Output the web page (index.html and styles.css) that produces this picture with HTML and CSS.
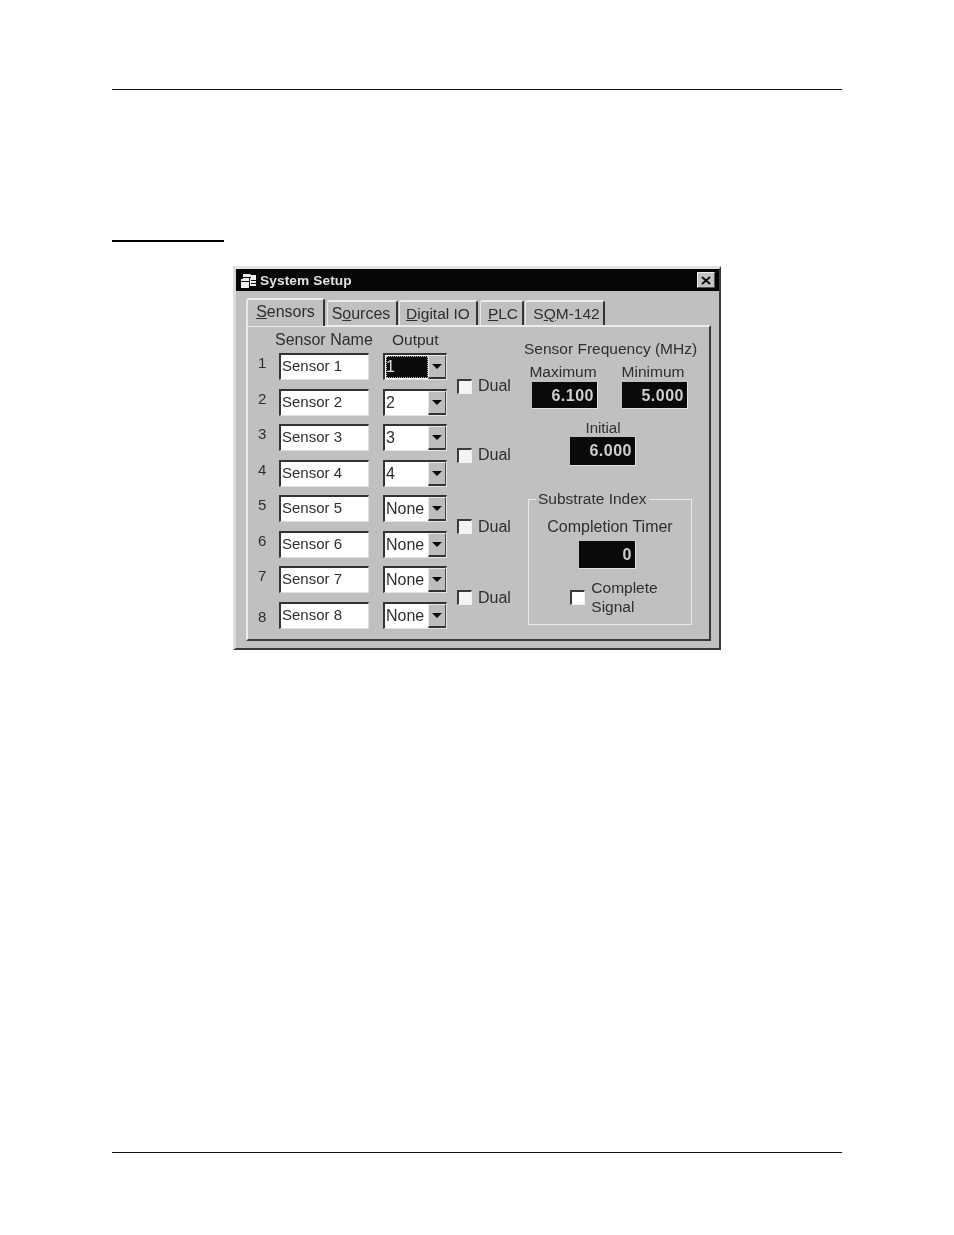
FILE: index.html
```html
<!DOCTYPE html>
<html lang="en">
<head>
<meta charset="utf-8">
<title>System Setup</title>
<link rel="stylesheet" href="styles.css">
</head>
<body>
<div class="page">
  <div class="rule-top"></div>
  <div class="rule-short"></div>
  <section class="dialog">
    <header class="titlebar">
      <svg class="app-icon" viewBox="0 0 16 15" aria-hidden="true">
        <path d="M2 1h7l1 1h5v11H8v2H0V6h2z" fill="#eee"/>
        <path d="M2 4h8v1H2zM0 8h8v1H0zM8 5h1v8H8zM10 7h5v1h-5zM10 10h5v1h-5z" fill="#111"/>
      </svg>
      <span class="title-text">System Setup</span>
      <span class="close"><svg viewBox="0 0 11 10" aria-hidden="true"><path d="M1 1l9 8M10 1L1 9" fill="none" stroke="#111" stroke-width="2.2"/></svg></span>
    </header>
    <nav class="tabs">
      <span class="tab tab-active w-sensors"><u>S</u>ensors</span>
      <span class="tab w-sources">S<u>o</u>urces</span>
      <span class="tab w-digital"><u>D</u>igital IO</span>
      <span class="tab w-plc"><u>P</u>LC</span>
      <span class="tab w-sqm">S<u>Q</u>M-142</span>
    </nav>
    <div class="panel">
      <div class="sensor-grid">
        <div class="head head-name">Sensor Name</div>
        <div class="head head-output">Output</div>
        <div class="head"></div>

        <span class="num">1</span><span class="field">Sensor 1</span>
        <span class="combo"><span class="combo-value focused">1</span><span class="arrow"></span></span>
        <label class="dual dual-first"><span class="check"></span>Dual</label>

        <span class="num">2</span><span class="field">Sensor 2</span>
        <span class="combo"><span class="combo-value">2</span><span class="arrow"></span></span>

        <span class="num">3</span><span class="field">Sensor 3</span>
        <span class="combo"><span class="combo-value">3</span><span class="arrow"></span></span>
        <label class="dual"><span class="check"></span>Dual</label>

        <span class="num">4</span><span class="field">Sensor 4</span>
        <span class="combo"><span class="combo-value">4</span><span class="arrow"></span></span>

        <span class="num">5</span><span class="field">Sensor 5</span>
        <span class="combo"><span class="combo-value">None</span><span class="arrow"></span></span>
        <label class="dual"><span class="check"></span>Dual</label>

        <span class="num">6</span><span class="field">Sensor 6</span>
        <span class="combo"><span class="combo-value">None</span><span class="arrow"></span></span>

        <span class="num">7</span><span class="field">Sensor 7</span>
        <span class="combo"><span class="combo-value">None</span><span class="arrow"></span></span>
        <label class="dual"><span class="check"></span>Dual</label>

        <span class="num num-low">8</span><span class="field">Sensor 8</span>
        <span class="combo"><span class="combo-value">None</span><span class="arrow"></span></span>
      </div>

      <div class="freq">
        <div class="freq-title">Sensor Frequency (MHz)</div>
        <div class="freq-pair">
          <div class="freq-cell cell-max"><span class="lbl">Maximum</span><span class="display">6.100</span></div>
          <div class="freq-cell cell-min"><span class="lbl">Minimum</span><span class="display">5.000</span></div>
        </div>
        <div class="freq-cell cell-init"><span class="lbl">Initial</span><span class="display display-tall">6.000</span></div>
        <fieldset class="group">
          <legend>Substrate Index</legend>
          <div class="timer-label">Completion Timer</div>
          <span class="display display-timer">0</span>
          <label class="complete"><span class="check"></span><span>Complete<br>Signal</span></label>
        </fieldset>
      </div>
    </div>
  </section>
  <div class="spacer"></div>
  <div class="rule-bottom"></div>
</div>
</body>
</html>
```
FILE: styles.css
```css
html, body { margin: 0; padding: 0; background: #fff; }
body { width: 954px; height: 1235px; overflow: hidden; font-family: "Liberation Sans", Arial, sans-serif; }
.page { display: flex; flex-direction: column; align-items: flex-start; padding: 89px 112px 0; height: 1064px; }
.rule-top { width: 730px; height: 1px; background: #111; }
.rule-short { width: 112px; height: 2px; background: #000; margin-top: 150px; }
.rule-bottom { width: 730px; height: 1px; background: #111; }
.spacer { flex: 1; }

.dialog {
  box-sizing: border-box; width: 488px; height: 384px; margin: 24px 0 0 121px;
  background: #c0c0c0; color: #2e2e2e; font-size: 16px;
  border-style: solid; border-width: 3px 2px 2px 3px;
  border-color: #e4e4e4 #3c3c3c #3c3c3c #dcdcdc;
  filter: blur(.35px);
}
.titlebar { display: flex; align-items: center; height: 22px; background: #060606; padding: 0 4px 0 5px; }
.app-icon { width: 16px; height: 15px; flex: none; }
.title-text { margin-left: 3px; color: #e2e2e2; font-weight: 700; font-size: 13.7px; letter-spacing: .1px; flex: 1; }
.close { width: 18px; height: 16px; box-sizing: border-box; background: #c4c4c4; border: 1px solid; border-color: #eee #555 #555 #eee; display: flex; align-items: center; justify-content: center; }
.close svg { width: 10px; height: 9px; }

.tabs { display: flex; align-items: flex-end; height: 34px; padding-left: 10px; position: relative; z-index: 1; }
.tab {
  box-sizing: border-box; height: 25px; display: flex; align-items: center; justify-content: center;
  border-style: solid; border-width: 2px 2px 0 1px; border-color: #ececec #333 #c0c0c0 #e8e8e8;
  border-radius: 3px 3px 0 0; margin-left: 1px; font-size: 15.5px; padding-top: 1px; white-space: nowrap;
}
.tab-active { height: 28px; margin: 0 1px -1px 0; padding-top: 0; padding-bottom: 3px; background: #c0c0c0; border-left-width: 2px; font-size: 16px; }
.w-sensors { width: 79px; }
.w-sources { width: 71px; font-size: 16px; padding-right: 2px; }
.w-digital { width: 79px; }
.w-plc { width: 44px; margin-left: 2px; padding-left: 3px; }
.w-sqm { width: 80px; padding-left: 4px; }

.panel {
  box-sizing: border-box; display: flex; align-items: flex-start; width: 465px; height: 316px; margin-left: 10px;
  padding: 6.5px 0 0 10px; border-style: solid; border-width: 2px; border-color: #ececec #3a3a3a #3a3a3a #ececec;
}
.sensor-grid {
  display: grid; grid-template-columns: 21px 90px 78px 77px;
  grid-template-rows: 11px repeat(8, 27px); row-gap: 8.57px;
}
.head { line-height: 11px; white-space: nowrap; }
.head-name { grid-column: 1 / 3; padding-left: 17px; }
.head-output { padding-left: 23px; font-size: 15.5px; }
.num { align-self: center; padding: 0 0 7px 0; line-height: 16px; font-size: 15px; }
.num-low { padding: 3px 0 0; }
.field {
  box-sizing: border-box; background: #fff; display: flex; align-items: center; padding: 0 0 3px 1px; font-size: 15px;
  border-style: solid; border-width: 2px 1px 1px 2px; border-color: #333 #dfdfdf #dfdfdf #333; white-space: nowrap;
}
.combo {
  box-sizing: border-box; width: 64px; justify-self: end; display: flex; background: #fff;
  border-style: solid; border-width: 2px 1px 1px 2px; border-color: #333 #e4e4e4 #e4e4e4 #333;
}
.combo-value { flex: 1; display: flex; align-items: center; padding: 0 0 0 1px; white-space: nowrap; min-width: 0; }
.combo-value.focused { background: #0a0a0a; color: #ddd; outline: 1px dotted #bbb; outline-offset: -1px; margin: 1px 0 1px 1px; padding-left: 0; }
.arrow {
  box-sizing: border-box; width: 18px; flex: none; background: #bdbdbd; position: relative;
  border-style: solid; border-width: 1px 1px 2px 1px; border-color: #e6e6e6 #444 #333 #e6e6e6;
}
.arrow::after {
  content: ""; position: absolute; left: 3px; top: 8px; border-style: solid; border-width: 5px 5px 0;
  border-color: #0a0a0a transparent transparent;
}
.dual { grid-column: 4; grid-row: span 2; justify-self: end; width: 67px; align-self: center; display: flex; align-items: center; gap: 6px; }
.dual-first { padding-top: 4px; }
.check {
  box-sizing: border-box; width: 15px; height: 15px; flex: none; background: #f4f4f4;
  border-style: solid; border-width: 2px 1px 1px 2px; border-color: #3a3a3a #f0f0f0 #f0f0f0 #3a3a3a;
}

.freq { width: 175px; padding-top: 7.5px; display: flex; flex-direction: column; align-items: flex-start; font-size: 15.5px; }
.freq-title { line-height: 16px; white-space: nowrap; }
.freq-pair { display: flex; margin: 7px 0 0 8px; }
.freq-cell { display: flex; flex-direction: column; align-items: center; }
.lbl { line-height: 16px; white-space: nowrap; }
.cell-max { width: 66px; }
.cell-max .lbl, .cell-min .lbl { margin-right: 4px; }
.cell-min { width: 66px; margin-left: 24px; }
.cell-init { margin: 11px 0 0 46px; width: 66px; font-size: 15px; }
.display {
  box-sizing: border-box; display: block; width: 66px; height: 27px; margin-top: 2px; padding-right: 3px; background: #0a0a0a;
  color: #cfcfcf; font-weight: 700; font-size: 16px; line-height: 27px; text-align: right; letter-spacing: .5px;
  border-style: solid; border-width: 0 1px 1px 0; border-color: #e2e2e2;
}
.display-tall { height: 29px; margin-top: 1px; line-height: 27px; }
.group {
  box-sizing: border-box; width: 164px; height: 134px; margin: 25px 0 0 4px; padding: 0; min-inline-size: 0;
  border: 1px solid #e8e8e8; display: flex; flex-direction: column; align-items: center;
}
.group legend { margin-left: 7px; padding: 0 2px; line-height: 16px; white-space: nowrap; }
.timer-label { line-height: 16px; margin-top: 12px; white-space: nowrap; font-size: 16px; }
.display-timer { width: 57px; height: 28px; margin: 6px 5px 0 0; }
.complete { display: flex; align-items: center; gap: 6px; margin: 9px 0 0 8px; line-height: 19px; }
.complete .check { background: #fff; }
```
